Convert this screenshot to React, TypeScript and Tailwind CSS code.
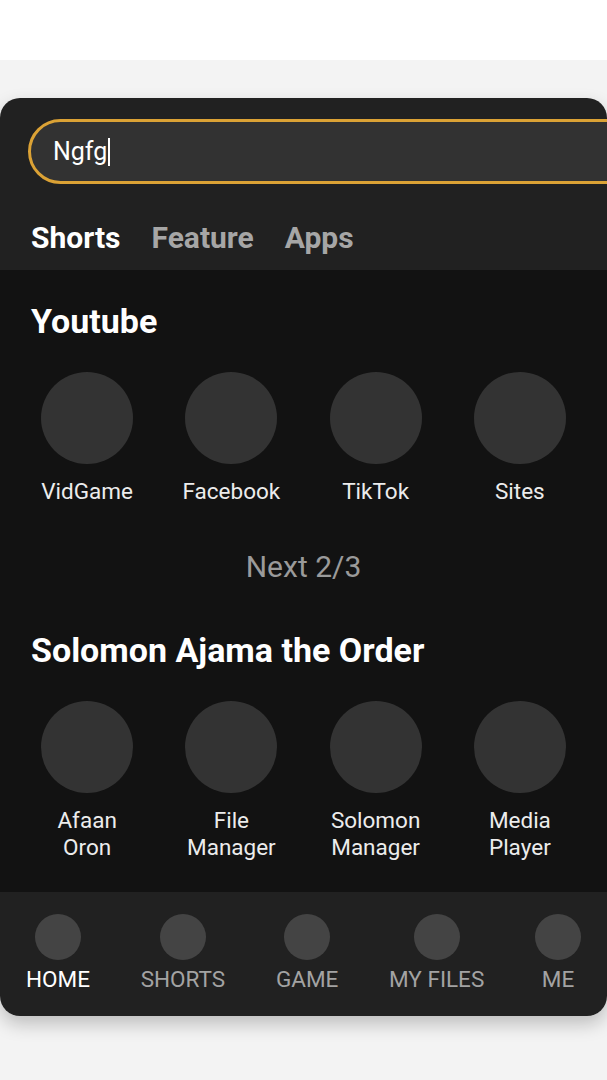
import React from "react";

const row1 = ["VidGame", "Facebook", "TikTok", "Sites"];
const row2 = [
  ["Afaan", "Oron"],
  ["File", "Manager"],
  ["Solomon", "Manager"],
  ["Media", "Player"],
];
const nav = ["HOME", "SHORTS", "GAME", "MY FILES", "ME"];

export default function App() {
  return (
    <div
      className="min-h-[1080px] bg-[#f3f3f3] overflow-hidden"
      style={{ fontFamily: "Roboto, 'Noto Sans', Arial, sans-serif" }}
    >
      <div className="h-[60px] bg-white" />
      <div className="h-[38px]" />
      <div className="w-full rounded-[20px] overflow-hidden shadow-[0_8px_18px_rgba(0,0,0,0.22)]">
        {/* header */}
        <div className="bg-[#212121] h-[172px] pt-[21px]">
          <div className="ml-[28px] w-[620px] h-[65px] rounded-full border-[3px] border-[#dba235] bg-[#323232] pl-[22px] flex items-center">
            <span className="text-[25px] text-white leading-none">Ngfg</span>
            <span className="ml-[1px] w-[2px] h-[28px] bg-white" />
          </div>
          <div className="mt-[37px] px-[31px] flex gap-[31px] text-[30px] font-bold leading-[33px]">
            <span className="text-white">Shorts</span>
            <span className="text-[#a6a6a6]">Feature</span>
            <span className="text-[#a6a6a6]">Apps</span>
          </div>
        </div>

        {/* content */}
        <div className="bg-[#121212] h-[622px] pt-[32px]">
          <div className="px-[31px] text-[34px] font-bold leading-[38px] text-white">Youtube</div>
          <div className="mt-[32px] px-[15px] grid grid-cols-4">
            {row1.map((l) => (
              <div key={l} className="flex flex-col items-center">
                <div className="w-[92px] h-[92px] rounded-full bg-[#333333]" />
                <div className="mt-[14px] text-[22.5px] leading-[27px] text-[#ececec]">{l}</div>
              </div>
            ))}
          </div>
          <div className="mt-[45px] text-center text-[30px] leading-[34px] text-[#9a9a9a]">Next 2/3</div>
          <div className="mt-[47px] px-[31px] text-[34px] font-bold leading-[38px] text-white">
            Solomon Ajama the Order
          </div>
          <div className="mt-[32px] px-[15px] grid grid-cols-4">
            {row2.map((l) => (
              <div key={l.join()} className="flex flex-col items-center">
                <div className="w-[92px] h-[92px] rounded-full bg-[#333333]" />
                <div className="mt-[14px] text-[22.5px] leading-[27px] text-[#ececec] text-center">
                  {l[0]}
                  <br />
                  {l[1]}
                </div>
              </div>
            ))}
          </div>
        </div>

        {/* bottom nav */}
        <div className="bg-[#212121] h-[124px] pt-[22px] px-[26px] flex justify-between">
          {nav.map((n, i) => (
            <div key={n} className="flex flex-col items-center">
              <div className="w-[46px] h-[46px] rounded-full bg-[#444444]" />
              <div
                className={
                  "mt-[7px] text-[22.5px] leading-[25px] " +
                  (i === 0 ? "text-white" : "text-[#a3a3a3]")
                }
              >
                {n}
              </div>
            </div>
          ))}
        </div>
      </div>
    </div>
  );
}
